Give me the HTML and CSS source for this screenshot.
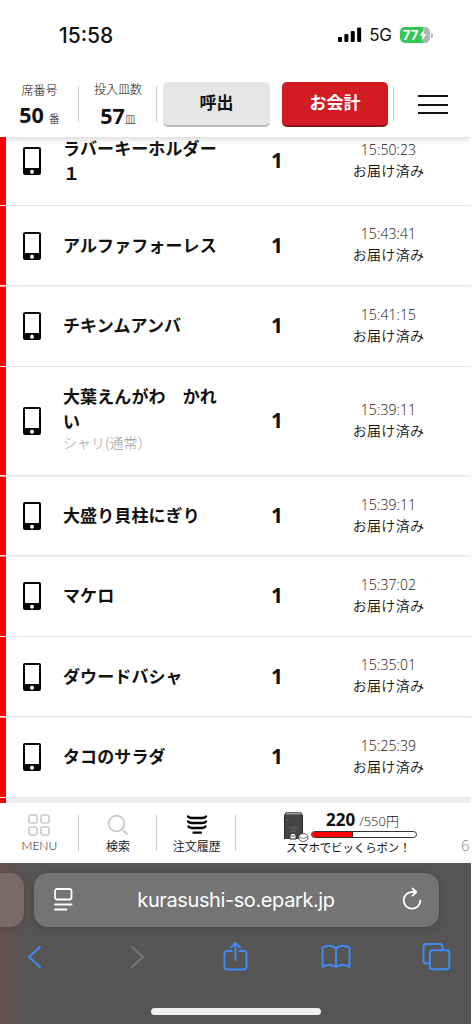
FILE: index.html
```html
<!DOCTYPE html>
<html lang="ja">
<head>
<meta charset="utf-8">
<title>注文履歴</title>
<link rel="stylesheet" href="styles.css">
</head>
<body>
<svg class="defs" width="0" height="0"><defs>
<symbol id="phone" viewBox="0 0 20 30"><rect x="1" y="1" width="18" height="28" rx="2" fill="#080808"/><rect x="3" y="3" width="14" height="19" fill="#fff"/><circle cx="10" cy="25.7" r="2" fill="#fff"/></symbol>
</defs></svg>
<main class="screen">
  <div class="status">
    <span class="clock">15:58</span>
    <svg class="signal" width="24" height="16" viewBox="0 0 24 16"><rect x="0" y="10" width="4" height="5" rx="1"/><rect x="6.4" y="7" width="4" height="8" rx="1"/><rect x="12.8" y="4" width="4" height="11" rx="1"/><rect x="19.2" y="0.5" width="4" height="14.5" rx="1"/></svg>
    <span class="net">5G</span>
    <div class="battery"><span>77</span><svg width="8" height="12" viewBox="0 0 8 12"><path d="M5.5 0 .5 6.8h3L2.4 12 7.6 5H4.4z" fill="#fff"/></svg></div>
    <i class="cap"></i>
  </div>
  <header class="header">
    <div class="seat"><small>席番号</small><div><b>50</b><em>番</em></div></div>
    <div class="plates"><small>投入皿数</small><div><b>57</b><em>皿</em></div></div>
    <div class="call">呼出</div>
    <div class="pay">お会計</div>
    <div class="burger"><i></i><i></i><i></i></div>
  </header>
  <section class="list">
    <article class="row first"><svg class="phone"><use href="#phone"/></svg><div class="name">ラバーキーホルダー１</div><b class="qty">1</b><div class="when"><time>15:50:23</time><span>お届け済み</span></div></article>
    <article class="row"><svg class="phone"><use href="#phone"/></svg><div class="name">アルファフォーレス</div><b class="qty">1</b><div class="when"><time>15:43:41</time><span>お届け済み</span></div></article>
    <article class="row"><svg class="phone"><use href="#phone"/></svg><div class="name">チキンムアンバ</div><b class="qty">1</b><div class="when"><time>15:41:15</time><span>お届け済み</span></div></article>
    <article class="row tall"><svg class="phone"><use href="#phone"/></svg><div class="name">大葉えんがわ　かれい<small>シャリ(通常）</small></div><b class="qty">1</b><div class="when"><time>15:39:11</time><span>お届け済み</span></div></article>
    <article class="row"><svg class="phone"><use href="#phone"/></svg><div class="name">大盛り貝柱にぎり</div><b class="qty">1</b><div class="when"><time>15:39:11</time><span>お届け済み</span></div></article>
    <article class="row"><svg class="phone"><use href="#phone"/></svg><div class="name">マケロ</div><b class="qty">1</b><div class="when"><time>15:37:02</time><span>お届け済み</span></div></article>
    <article class="row"><svg class="phone"><use href="#phone"/></svg><div class="name">ダウードバシャ</div><b class="qty">1</b><div class="when"><time>15:35:01</time><span>お届け済み</span></div></article>
    <article class="row"><svg class="phone"><use href="#phone"/></svg><div class="name">タコのサラダ</div><b class="qty">1</b><div class="when"><time>15:25:39</time><span>お届け済み</span></div></article>
    <div class="strip"></div>
  </section>
  <nav class="tabs">
    <div class="tab"><svg width="24" height="24" viewBox="0 0 24 24" fill="none" stroke="#c9c9c9" stroke-width="1.6"><rect x="2" y="2" width="8" height="8" rx="2"/><rect x="14" y="2" width="8" height="8" rx="2"/><rect x="2" y="14" width="8" height="8" rx="2"/><rect x="14" y="14" width="8" height="8" rx="2"/></svg><span class="latin">MENU</span></div>
    <div class="tab"><svg width="24" height="24" viewBox="0 0 24 24" fill="none" stroke="#c9c9c9" stroke-width="1.8"><circle cx="10.500" cy="10.500" r="7.800"/><path d="m17 17.500 4.500 4"/></svg><span>検索</span></div>
    <div class="tab"><svg width="24" height="24" viewBox="0 0 24 24" fill="none" stroke="#080808" stroke-width="2.300" stroke-linecap="round"><path d="M3 3.500q1 1.500 4 1.500h10q3 0 4-1.500M3 8.500Q4 10 7 10h10q3 0 4-1.500M3.500 13.500q1 1.500 4 1.500h9q3 0 4-1.500M8.500 19.700h7.500"/></svg><span>注文履歴</span></div>
    <div class="bonus">
      <div class="meter">
        <svg width="26" height="32" viewBox="0 0 26 32"><path d="M3 1h15l2 3v24H1V4z" fill="#444"/><path d="M3.500 1.500h14l1 2h-16z" fill="#999"/><path d="M1.500 6v22M19.500 6v22" stroke="#222"/><path d="M3 10l2-2M7 16l2 2 2-2 2 2 2-2M8 20h5" stroke="#777" stroke-width=".8" fill="none"/><path d="M7 28v-4q3-4 6 0v4z" fill="#fff" stroke="#222"/><path d="M8 25h4" stroke="#555"/><ellipse cx="20.300" cy="26.500" rx="4.700" ry="4" fill="#fff" stroke="#333" stroke-width=".8"/><path d="M15.800 26q4 3 9 0" stroke="#555" fill="none" stroke-width=".7"/></svg>
        <div class="score"><p><b>220</b><span>/550円</span></p><div class="bar"><i></i></div></div>
      </div>
      <div class="caption">スマホでビッくらポン！</div>
    </div>
    <span class="six">6</span>
  </nav>
  <footer class="browser">
    <div class="address">
      <div class="prev"></div>
      <div class="url"><svg width="24" height="26" viewBox="0 0 24 26" fill="none" stroke="#fff" stroke-width="1.800" stroke-linecap="round"><rect x="4" y="2" width="16.500" height="10.500" rx="2"/><path d="M4 17.500h16.500M4 22.500h11.500"/></svg><span>kurasushi-so.epark.jp</span><svg width="24" height="26" viewBox="0 0 24 26" fill="none" stroke="#fff" stroke-width="1.800" stroke-linecap="round" stroke-linejoin="round"><path d="M20.300 13.500a8.300 8.300 0 1 1-8.300-8.500h4M12.500 1.500 16.300 5l-3.800 3.700"/></svg></div>
    </div>
    <div class="tools">
      <svg width="32" height="32" viewBox="0 0 32 32"><path d="M22 6 11 16l11 10"/></svg>
      <svg class="off" width="32" height="32" viewBox="0 0 32 32"><path d="m13 6 11 10-11 10"/></svg>
      <svg width="32" height="32" viewBox="0 0 32 32"><path d="M12.500 10H8.500q-3 0-3 3v12.500q0 3 3 3h16q3 0 3-3V13q0-3-3-3h-4M16.500 19V2M12 6.500 16.500 2 21 6.500"/></svg>
      <svg width="32" height="32" viewBox="0 0 32 32"><path d="M16 7.500v18.500M16 7.500C12.500 4 6.500 4 2.500 6.500V26q7-4 13.500 0 6.500-4 13.500 0V6.500C25.500 4 19.500 4 16 7.500z"/></svg>
      <svg width="32" height="32" viewBox="0 0 32 32"><path d="M9.500 22.500H6.500q-3 0-3-3V6q0-3 3-3h13q3 0 3 3v3"/><rect x="9.800" y="9.300" width="19.500" height="19" rx="3"/></svg>
    </div>
    <div class="home"></div>
  </footer>
</main>
</body>
</html>
```
FILE: styles.css
```css
* { box-sizing: border-box; }
body { margin: 0; background: #fff; color: #111; font-family: "Noto Sans CJK JP", sans-serif; }
p { margin: 0; }
em, i { font-style: normal; }
.defs { display: block; }
.screen { width: 473px; height: 1024px; display: flex; flex-direction: column; overflow: hidden; }
.status { height: 70px; flex: none; display: flex; align-items: center; padding: 0 40px 0 59px; font-family: Inter, sans-serif; }
.clock { font-size: 21px; font-weight: 500; width: 280px; letter-spacing: 0; }
.signal { margin-right: 7px; }
.net { font-size: 17px; width: 31px; letter-spacing: -.3px; }
.battery { width: 30px; height: 16px; border-radius: 5px; background: linear-gradient(90deg, #33c759 76%, #b3b3b3 76%); display: flex; align-items: center; justify-content: center; color: #fff; font-size: 13px; font-weight: 700; gap: 1px; }
.cap { width: 2px; height: 5px; margin-left: 1px; border-radius: 0 2px 2px 0; background: #b3b3b3; }
.header { height: 67px; flex: none; display: flex; align-items: flex-start; padding-top: 12px; position: relative; z-index: 1; background: #fff; width: 471px; box-shadow: 0 2px 6px rgba(0,0,0,.16); clip-path: inset(0 0 -10px 0); }
.seat, .plates { height: 45px; display: flex; flex-direction: column; align-items: center; background: linear-gradient(#ccc, #ccc) right 4px / 1px 36px no-repeat; }
.seat { width: 79px; }
.plates { width: 78px; }
.seat small, .plates small { font-size: 12px; line-height: 17px; font-weight: 300; white-space: nowrap; margin-top: -1px; }
.plates small { margin-top: -2px; }
.seat > div, .plates > div { display: flex; align-items: baseline; line-height: 24px; margin-top: 5px; }
.plates > div { margin-top: 7px; }
.seat > div { gap: 5px; }
.seat b, .plates b { font-family: "Noto Sans", sans-serif; font-weight: 700; font-size: 21.500px; }
.seat em, .plates em { font-size: 11px; font-weight: 300; }
.call, .pay { height: 45px; width: 107px; margin-left: 6px; border-radius: 5px; display: flex; align-items: center; justify-content: center; font-weight: 700; font-size: 17px; padding-bottom: 5px; }
.call { background: #e6e6e6; border-bottom: 2px solid #b9b9b9; }
.pay { margin-left: 12px; width: 106px; background: #d31b24; border-bottom: 2px solid #941017; color: #fff; }
.burger { flex: 1; margin: 4px 0 0 5px; height: 36px; border-left: 1px solid #ccc; padding: 9px 0 0 24px; display: grid; gap: 6.500px; align-content: start; }
.burger i { width: 30px; height: 2px; background: #111; }
.list { height: 666px; flex: none; overflow: hidden; width: 471px; }
.row { height: 80.400px; display: grid; grid-template-columns: 57px 167px 94px 130px; align-items: center; padding-left: 6px; background: linear-gradient(#e6e6e6, #e6e6e6) bottom / 100% 1.500px no-repeat, linear-gradient(#f00, #f00) left / 6px 100% no-repeat; }
.first { height: 88px; margin-top: -18.700px; }
.tall { height: 109.500px; }
.phone { width: 20px; height: 30px; margin: -2px 0 0 16px; }
.name, .qty, .when { margin-top: -4.500px; }
.name { font-weight: 700; font-size: 17px; line-height: 25px; letter-spacing: .1px; }
.name small { display: block; font-weight: 300; font-size: 14px; line-height: 21px; color: #999; letter-spacing: 0; margin-top: -1px; }
.tall .name { margin-top: -7px; }
.qty { font: 700 21px/25px "Noto Sans", sans-serif; text-align: center; margin-top: -3px; }
.when { text-align: center; font-size: 14px; font-weight: 350; line-height: 21px; letter-spacing: .3px; margin-left: -1px; }
.when time { display: block; font-family: "Open Sans", sans-serif; font-weight: 300; font-size: 14px; letter-spacing: .1px; }
.when span { display: block; }
.strip { height: 6px; background: linear-gradient(#f00, #f00) left / 6px 100% no-repeat, #eee; }
.tabs { height: 60px; flex: none; display: flex; padding-top: 9px; position: relative; z-index: 1; background: #fff; }
.tab { width: 78.700px; padding-top: 1px; display: flex; flex-direction: column; align-items: center; font-size: 12px; line-height: 18px; font-weight: 350; background: linear-gradient(#ccc, #ccc) right 3px / 1px 36px no-repeat; }
.latin { font-family: Lato, sans-serif; }
.bonus { width: 180px; margin-left: 46px; }
.meter { display: flex; height: 28px; }
.meter > svg { flex: none; margin: -1px 2px 0 1px; }
.score { width: 107px; }
.score p { display: flex; align-items: baseline; padding-left: 15px; line-height: 17px; height: 20px; gap: 4px; margin-top: -1px; }
.score b { font: 700 17px/17px "Noto Sans", sans-serif; }
.score span { font-family: "Open Sans", "Noto Sans CJK JP", sans-serif; font-size: 13px; font-weight: 300; white-space: nowrap; }
.bar { height: 7px; width: 106px; border: 1px solid #333; border-radius: 4px; overflow: hidden; }
.bar i { display: block; width: 39%; height: 5px; background: #f00; border-right: 1px solid #333; }
.caption { font-size: 11.500px; line-height: 17px; letter-spacing: -.15px; white-space: nowrap; margin: -1px 0 0 4px; }
.six { font: 300 15px/20px "Open Sans", sans-serif; color: #888; margin: 23px 0 0 -1px; }
.browser { width: 471px; flex: 1; background: linear-gradient(90deg, #644f4f 0, #555 32px); display: flex; flex-direction: column; }
.address { display: flex; gap: 10px; padding-top: 10px; height: 64px; }
.prev { width: 24px; height: 54px; border-radius: 0 14px 14px 0; background: #7b6868; box-shadow: 0 2px 8px rgba(0,0,0,.15); }
.url { width: 405px; height: 54px; border-radius: 14px; background: #747474; display: flex; align-items: center; justify-content: space-between; padding: 0 15px 0 17px; color: #fff; font: 400 20px Inter, sans-serif; box-shadow: 0 2px 8px rgba(0,0,0,.2); }
.url span { letter-spacing: -.4px; margin-right: 3px; }
.tools { display: flex; gap: 68.500px; padding: 14px 0 0 18px; }
.tools svg { fill: none; stroke: #3f8cf7; stroke-width: 1.900; stroke-linecap: round; stroke-linejoin: round; flex: none; }
.tools .off { stroke: #777; }
.home { width: 170px; height: 7px; border-radius: 4px; background: #f2f0f1; margin: 35px 0 0 151px; }
```
